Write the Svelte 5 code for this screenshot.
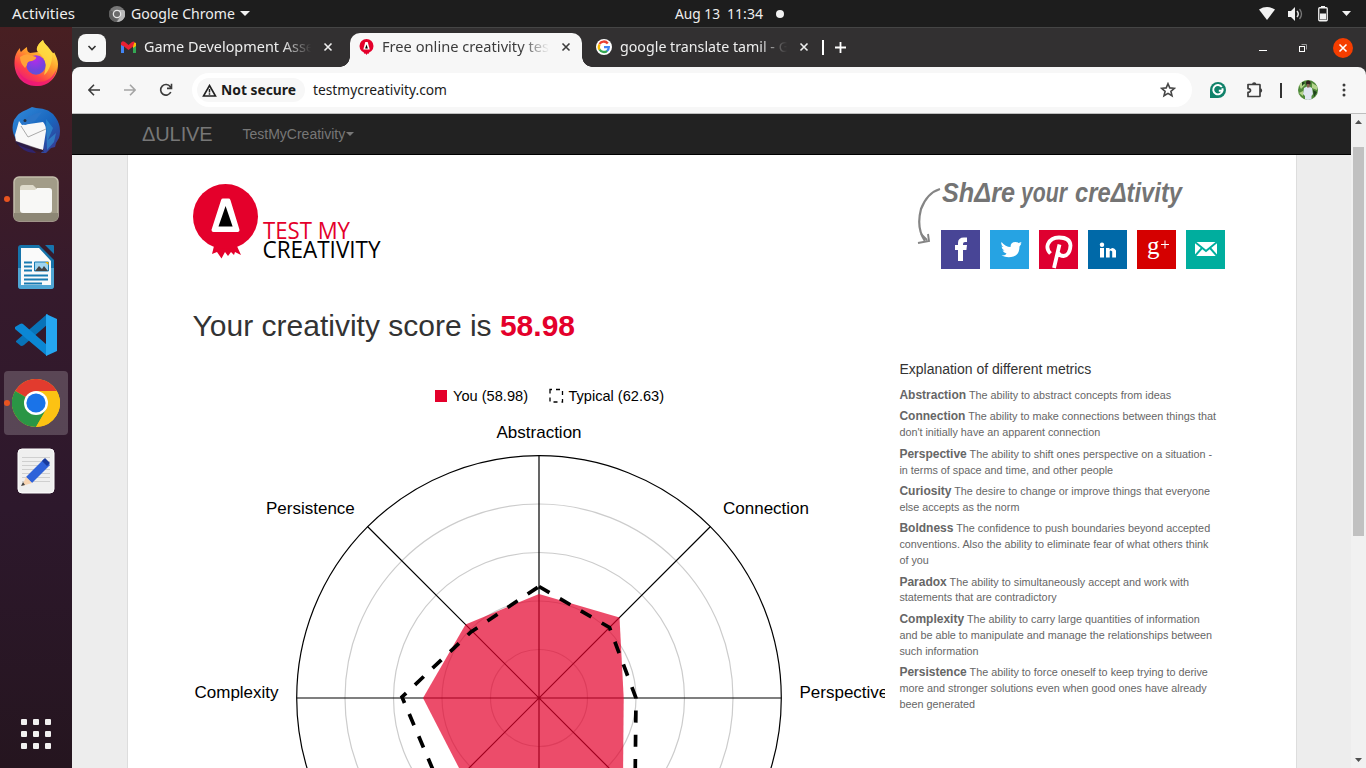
<script>
  const metrics = [
    ['Abstraction', ['The ability to abstract concepts from ideas']],
    ['Connection', ['The ability to make connections between things that', "don't initially have an apparent connection"]],
    ['Perspective', ['The ability to shift ones perspective on a situation -', 'in terms of space and time, and other people']],
    ['Curiosity', ['The desire to change or improve things that everyone', 'else accepts as the norm']],
    ['Boldness', ['The confidence to push boundaries beyond accepted', 'conventions. Also the ability to eliminate fear of what others think', 'of you']],
    ['Paradox', ['The ability to simultaneously accept and work with', 'statements that are contradictory']],
    ['Complexity', ['The ability to carry large quantities of information', 'and be able to manipulate and manage the relationships between', 'such information']],
    ['Persistence', ['The ability to force oneself to keep trying to derive', 'more and stronger solutions even when good ones have already', 'been generated']]
  ];
  const rings = [48.5, 97, 145.5, 194];
  const apps = [0, 1, 2].flatMap((r) => [0, 1, 2].map((c) => [c * 12, r * 12]));
</script>

{#snippet label(text, width, size, weight = 400)}
  <svg class="label" {width} height="20"><text x="0" y="15" font-size={size} font-weight={weight} textLength={width} lengthAdjust="spacingAndGlyphs">{text}</text></svg>
{/snippet}

{#snippet cross()}
  <svg width="10" height="10" viewBox="0 0 10 10"><path d="M1.500 1.500l7 7M8.500 1.500l-7 7" stroke="currentColor" stroke-width="1.600" /></svg>
{/snippet}

<div class="desktop">
  <header class="topbar">
    <div class="left">
      {@render label('Activities', 63, 14)}
      <svg class="gchrome" width="16" height="16" viewBox="0 0 16 16"><circle cx="8" cy="8" r="8" fill="#777" /><path d="M8 8L1 4A8 8 0 0 0 7 16l4-7z" fill="#606060" /><path d="M8 4h7.200A8 8 0 0 1 8 16l3.500-6z" fill="#b8b8b8" /><circle cx="8" cy="8" r="4.300" fill="#e8e8e8" /><circle cx="8" cy="8" r="3" fill="#6b6b6b" /></svg>
      {@render label('Google Chrome', 104, 14)}
      <svg class="caret" width="10" height="5"><path d="M0 0h10L5 5z" fill="#f2f2f2" /></svg>
    </div>
    <div class="clock">{@render label('Aug 13', 45, 14)}{@render label('11:34', 36, 14)}<i></i></div>
    <div class="status">
      <svg width="16" height="13" viewBox="0 0 16 13"><path d="M0 2.500Q8-2.400 16 2.500L8 13z" fill="#f2f2f2" /></svg>
      <svg width="16" height="14" viewBox="0 0 16 14"><path d="M0 4h3l4-4v14l-4-4H0z" fill="#f2f2f2" /><path d="M9 4q2.500 3 0 6" stroke="#ddd" stroke-width="1.500" fill="none" /><path d="M11.500 2q4 5 0 10" stroke="#777" stroke-width="1.300" fill="none" /></svg>
      <svg width="10" height="16" viewBox="0 0 10 16"><rect x=".75" y="1.750" width="8.500" height="13" rx="1" fill="none" stroke="#f2f2f2" stroke-width="1.300" /><path d="M3 0h4v2H3zM2 7.500h6V13.500H2z" fill="#f2f2f2" /></svg>
      <svg width="9" height="5"><path d="M0 0h9L4.500 5z" fill="#f2f2f2" /></svg>
    </div>
  </header>

  <aside class="dock">
    <div class="item">
      <svg width="48" height="48" viewBox="0 0 48 48">
        <defs>
          <linearGradient id="ff" x1=".8" y1=".1" x2=".25" y2="1"><stop offset="0" stop-color="#fff14a" /><stop offset=".38" stop-color="#ff9a2b" /><stop offset=".7" stop-color="#ff4048" /><stop offset="1" stop-color="#e31587" /></linearGradient>
          <radialGradient id="fp" cx=".45" cy=".2" r=".8"><stop offset="0" stop-color="#b42bea" /><stop offset=".7" stop-color="#7343dd" /><stop offset="1" stop-color="#5c54d6" /></radialGradient>
        </defs>
        <path d="M3 18C4 14 6 11 8 9c0 2 0 3 1 4 2-2 4-4 6-5 0 4 1 5 3 6l8-1c-3-3 0-8 5-12 1 4 5 6 9 12 1 1 2 2 2 0 2 4 4 8 4 12C46 39 36 47 24 47 10 47 0 35 3 18z" fill="url(#ff)" />
        <path d="M31 1c1 4 6 7 9 13 1 6-2 18-8 22 4-12 0-18-6-23-3-4 1-9 5-12z" fill="#ffdc42" opacity=".8" />
        <circle cx="24" cy="26" r="9.700" fill="url(#fp)" />
        <path d="M8 18q6-4 10-2l6 2q1 2-4 4-5 0-5 4l-2 3Q8 24 8 18z" fill="#ffa238" />
        <path d="M4 25q3 16 21 18 14 1 20-14-4 18-20 18Q8 45 4 25z" fill="#ec127a" opacity=".65" />
      </svg>
    </div>
    <div class="item">
      <svg width="50" height="50" viewBox="0 0 50 50">
        <defs><linearGradient id="tb" x2="1" y2="1"><stop stop-color="#328bdc" /><stop offset=".55" stop-color="#1965bd" /><stop offset="1" stop-color="#403188" /></linearGradient></defs>
        <path d="M15 4l6-3 4 1q14 0 20 10 6 9 3 20l-3 5-1 4-4 1-5 5h-5l3-4L6 35Q-1 25 3 14 8 6 15 4z" fill="url(#tb)" />
        <path d="M8 15l3 4 21-3q3 3 3 9l-3 19q-12-3-27-8l-1-7z" fill="#f8f8f8" />
        <path d="M10 20l7 11 18-8" fill="none" stroke="#aaa" />
        <path d="M11 17q7-9 20-11l-7 9-10 4z" fill="#2b75c8" /><path d="M35 13l7 9-5 12 8-7-2 9-7 8" fill="#3397d7" opacity=".6" /><circle cx="14" cy="14.500" r="1.500" fill="#243041" />
        <path d="M4 35q9 13 21 12l-7-7z" fill="#30246d" /><path d="M5 35l27 9 1 2q-10 0-28-8z" fill="#28182f" opacity=".6" />
      </svg>
    </div>
    <div class="item running">
      <svg width="46" height="46" viewBox="0 0 46 46"><rect x="1" y="1" width="44" height="44" rx="5" fill="#a29c88" stroke="#c3bdab" stroke-width="1.500" /><path d="M1 37v5q1 3 4 3h36q3 0 4-3v-5" fill="#8d8775" /><path d="M7 12q0-3 3-3h10l3 3v6H7z" fill="#dedacb" /><path d="M7 14h15l2-2h12q3 0 3 3v19q0 3-3 3H10q-3 0-3-3z" fill="#f8f8f6" /></svg>
    </div>
    <div class="item">
      <svg width="38" height="46" viewBox="0 0 38 46"><path d="M1 4q0-3 3-3h18l15 15v26q0 3-3 3H4q-3 0-3-3z" fill="#1673aa" /><path d="M1 24h36v18q0 3-3 3H4q-3 0-3-3z" fill="#4fa5d3" /><path d="M4 4h18l12 13v24H4z" fill="#fafafa" /><path d="M28 1h8q1 0 1 1v8z" fill="#1775ae" /><path d="M7 18.500h8M7 22.500h8M7 26.500h8M7 31.500h24M7 35.500h24M7 39.500h18" stroke="#197bb2" stroke-width="2" /><path d="M17.500 18h14v9h-14z" fill="#9ed4ef" stroke="#197bb2" /><path d="M18 27l4-5 3 3 2-3 4 5z" fill="#444" /><path d="M28 18h3.500v3z" fill="#f2b200" /></svg>
    </div>
    <div class="item">
      <svg width="42" height="42" viewBox="0 0 42 42"><path d="M1 28l5 4q2 0 3-1L33 10V0L31 1 1 27z" fill="#0873b8" /><path d="M0 13l5-3q2-1 3 0l24 21v11L0 15z" fill="#0b87d4" /><path d="M31 0l11 5v32l-11 5z" fill="#25a6f0" /></svg>
    </div>
    <div class="item running selected">
      <svg width="48" height="48" viewBox="0 0 48 48"><circle cx="24" cy="24" r="24" fill="#fcc213" /><path d="M24 24L3.200 12A24 24 0 0 1 44.800 12z" fill="#e23b2e" /><path d="M24 24L3.200 12A24 24 0 0 0 24 48L34.400 30z" fill="#2a9645" /><path d="M24 12h20.800A24 24 0 0 1 24 48l10.400-18z" fill="#fcc213" /><circle cx="24" cy="24" r="12" fill="#fff" /><circle cx="24" cy="24" r="9.600" fill="#1a73e8" /></svg>
    </div>
    <div class="item">
      <svg width="38" height="46" viewBox="0 0 38 46"><rect x="1" y="1" width="36" height="44" rx="4" fill="#efefef" stroke="#fff" /><path d="M5 9.500h28M5 13.500h28M5 17.500h28M5 21.500h28M5 25.500h28M5 29.500h28M5 33.500h28" stroke="#cfcfcf" /><path d="M9 29L27 11l6 6-18 18z" fill="#2f62d9" /><path d="M25 13l3-3 5 5-3 3z" fill="#17399c" /><path d="M9 29l6 6-10 3z" fill="#f7d4b2" /><path d="M6 34l2 3-4 1z" fill="#444" /></svg>
    </div>
    <svg class="apps" width="30" height="30">{#each apps as [x, y]}<rect {x} {y} width="6" height="6" rx="1" fill="#f2f0f0" />{/each}</svg>
  </aside>

  <main class="window">
    <div class="tabs">
      <span class="search"><svg width="10" height="6" viewBox="0 0 10 6"><path d="M1.500 1L5 4.500 8.500 1" fill="none" stroke="#333" stroke-width="1.600" /></svg></span>
      <div class="tab first">
        <svg class="fav" width="15" height="12" viewBox="0 0 15 12"><path d="M0 1.500V12h3V5z" fill="#4285f4" /><path d="M15 1.500V12h-3V5z" fill="#34a853" /><path d="M12 1l3 1v3l-3 2z" fill="#fbbc04" /><path d="M0 2Q1-1 4 1l3.500 3L11 1q2-1 2.500 0L12 5.500 7.500 9 3 5.500 0 4z" fill="#ea2032" /></svg>
        <div class="title dim">{@render label('Game Development Asse', 170, 14)}</div>{@render cross()}
      </div>
      <div class="tab active">
        <svg class="fav" width="15" height="16" viewBox="0 0 15 16"><circle cx="7.500" cy="7" r="7" fill="#e4002b" /><path d="M4.500 12l1 3 1-.5 1 1.500 1-1.500 1 .5 1-3z" fill="#e4002b" /><path d="M6.300 3h2.400l2 7.500H4.300z" fill="#fff" /><path d="M7.500 5.500l1.400 4H6.100z" fill="#000" /></svg>
        <div class="title">{@render label('Free online creativity tes', 167, 14)}</div>{@render cross()}
      </div>
      <div class="tab third">
        <svg class="fav" width="16" height="16" viewBox="0 0 16 16"><circle cx="8" cy="8" r="8" fill="#fff" /><g fill="none" stroke-width="2.300"><path d="M3.500 5A5 5 0 0 1 11.800 4.500" stroke="#ea4335" /><path d="M3.600 5.300A5 5 0 0 0 3.600 10.700" stroke="#fbbc04" /><path d="M3.600 10.500A5 5 0 0 0 11.200 11.800" stroke="#34a853" /><path d="M8 8.200h4.800Q12.700 10.500 11 12" stroke="#4285f4" /></g></svg>
        <div class="title dim">{@render label('google translate tamil - G', 169, 14)}</div>{@render cross()}
      </div>
      <i class="sep"></i>
      <svg class="plus" width="11" height="11"><path d="M5.500 0v11M0 5.500h11" stroke="#fff" stroke-width="1.800" /></svg>
      <div class="controls">
        <svg width="8" height="10"><path d="M0 7.500h8" stroke="#fff" /></svg>
        <svg width="8" height="8"><path d="M2.500.5h5v5" stroke="#999" fill="none" /><rect x=".5" y="2.500" width="5" height="5" fill="none" stroke="#fff" /></svg>
        <b>{@render cross()}</b>
      </div>
    </div>

    <div class="toolbar">
      <svg width="12" height="12" viewBox="0 0 12 12"><path d="M12 6H1M6 .7L.9 6 6 11.300" fill="none" stroke="#3c3c3c" stroke-width="1.600" /></svg>
      <svg width="12" height="12" viewBox="0 0 12 12"><path d="M0 6h11M6 .7L11.100 6 6 11.300" fill="none" stroke="#a5a5a5" stroke-width="1.600" /></svg>
      <svg width="14" height="14" viewBox="0 0 14 14"><path d="M11.800 9A5.300 5.300 0 1 1 11.300 3.800L12.500 5M12.500.8V5.400H8" fill="none" stroke="#3c3c3c" stroke-width="1.600" /></svg>
      <div class="omnibox">
        <div class="chip"><svg width="15" height="13" viewBox="0 0 15 13"><path d="M7.500 1.500l6 10.500h-12z" fill="none" stroke="#222" stroke-width="1.600" /><path d="M7.500 5v3.500M7.500 9.300v1.500" stroke="#222" stroke-width="1.500" /></svg>{@render label('Not secure', 75, 14, 700)}</div>
        {@render label('testmycreativity.com', 134, 14)}
        <svg class="star" width="16" height="16" viewBox="0 0 16 16"><path d="M8 1.700l1.800 4.200 4.600.4-3.500 3 1.100 4.500L8 11.400l-4 2.400 1.100-4.500-3.500-3 4.600-.4z" fill="none" stroke="#474747" stroke-width="1.600" /></svg>
      </div>
      <svg class="grammar" width="16" height="16" viewBox="0 0 16 16"><path d="M8 0a8 8 0 1 1 0 16H0V8a8 8 0 0 1 8-8z" fill="#10826a" /><path d="M11.800 5A4.700 4.700 0 1 0 12.500 8.800H8.800M12.500 6.200v2.600" fill="none" stroke="#fff" stroke-width="1.900" /></svg>
      <svg class="puzzle" width="18" height="18" viewBox="0 0 18 18"><path d="M2 3.500h11.500q.5 0 .5.500v11q0 .5-.5.500H2v-4.200q2.500-.3 2.500-1.900T2 7.600z" fill="none" stroke="#3e3e3e" stroke-width="1.700" stroke-linejoin="round" /><path d="M6 3.500a2.200 2.200 0 0 1 4.400 0zM14 7.200a2.200 2.200 0 0 1 0 4.400z" fill="#3e3e3e" /></svg>
      <i class="bar"></i>
      <svg class="avatar" width="20" height="20" viewBox="0 0 20 20"><defs><clipPath id="avatar"><circle cx="10" cy="10" r="10" /></clipPath></defs><g clip-path="url(#avatar)"><path d="M0 0h20v20H0z" fill="#4f8a3a" /><path d="M0 3l4-2 3 4-4 4zM14 3l5 3v4l-5-2zM1 13l4-2v5z" fill="#b2d38a" /><path d="M4 1l3 2-3 3zM15 10l4 2-3 5z" fill="#1e431b" /><path d="M6 8l4-2 4 2 1 6-1.500 2v4H7v-4l-2-2z" fill="#dfe5f2" /><circle cx="10.300" cy="3" r="2.400" fill="#30221d" /><path d="M9 4h2.600v3.500H9z" fill="#85604f" /></g></svg>
      <svg class="menu" width="4" height="14"><circle cx="2" cy="2" r="1.500" /><circle cx="2" cy="7" r="1.500" /><circle cx="2" cy="12" r="1.500" /></svg>
    </div>

    <div class="viewport">
      <div class="page">
        <nav><span class="brand">ΔULIVE</span><span>TestMyCreativity</span><i></i></nav>
        <section class="container">
          <div class="masthead">
            <svg width="195" height="80" viewBox="0 0 195 80">
              <path d="M22 58l-3 12 5-2 4.500 6.500L32 68l3 4 3-4 3 3 1-3 6 3-5-11z" fill="#e4002b" /><circle cx="32.500" cy="32.500" r="32.500" fill="#e4002b" />
              <path d="M30 16.500h5.500l9 29.500h-24z" fill="#fff" stroke="#fff" stroke-width="4" stroke-linejoin="round" /><path d="M32.600 22l7 20.500H25.500z" />
              <g font-family="Open Sans, sans-serif" font-size="23"><text x="70" y="55" fill="#e4002b" textLength="87" lengthAdjust="spacingAndGlyphs">TEST MY</text><text x="69.500" y="74" textLength="118" lengthAdjust="spacingAndGlyphs">CREATIVITY</text></g>
            </svg>
            <svg class="share" width="310" height="96" viewBox="0 0 310 96">
              <g fill="none" stroke="#858585"><path d="M23 13Q10 17 4 33-1 52 8 65" stroke-width="2.200" /><path d="M1 67l11-2-1-7M4 58l6 6" stroke-width="1.900" /></g>
              <g class="script"><text x="25" y="26" textLength="73" lengthAdjust="spacingAndGlyphs">ShΔre</text><text x="104" y="26" textLength="46" lengthAdjust="spacingAndGlyphs">your</text><text x="158" y="26" textLength="107" lengthAdjust="spacingAndGlyphs">creΔtivity</text></g>
              <g transform="translate(24 54)"><path d="M0 0h39v39H0z" fill="#484596" /><path d="M17 31V20h-3v-5h3v-2q0-5.500 6-5.500h3V12h-2q-2 0-2 2v1h4l-.6 5H22v11z" fill="#fff" /></g>
              <g transform="translate(73 54)"><path d="M0 0h39v39H0z" fill="#26a3e3" /><path d="M11.500 12q4 5 9 5 0-5 5-5 2 0 3 1l3-1-1 2 1-.5-2 3q0 8-6 10-6 2-12-1 4 0 5-2-3-1-4-3h2q-3-2-3-4l2 .5q-3-2-2-5z" fill="#fff" /></g>
              <g transform="translate(122 54)"><path d="M0 0h39v39H0z" fill="#de0030" /><path d="M11.500 23.500Q7 19 9 14q3-6.500 11-6.500 11 0 11.500 8-.5 9.500-7 10.500-4 0-5.500-3.500M20.500 14.500L15 38" fill="none" stroke="#fff" stroke-width="3.800" /></g>
              <g transform="translate(171 54)"><path d="M0 0h39v39H0z" fill="#0069a8" /><path d="M12 18h4v9.500h-4zM18 18h3.500v1.500q4-3.500 6.500 1v7h-3.800v-6q-2.200-2-2.500 0v6H18z" fill="#fff" /><circle cx="14" cy="14.800" r="2.200" fill="#fff" /></g>
              <g transform="translate(220 54)"><path d="M0 0h39v39H0z" fill="#d50000" /><text x="10" y="24" font-family="Liberation Serif, serif" font-size="25" fill="#fff">g</text><path d="M24 14.500h8M28 10.500v8" stroke="#fff" /></g>
              <g transform="translate(269 54)"><path d="M0 0h39v39H0z" fill="#00ae9e" /><path d="M9 12h22v14H9z" fill="#fff" /><path d="M9 12l11 9 11-9M9 26l7-8M31 26l-7-8" fill="none" stroke="#00ae9e" stroke-width="1.900" /></g>
            </svg>
          </div>
          <h1>Your creativity score is <strong>58.98</strong></h1>
          <div class="columns">
            <svg class="chart" width="694" height="412" viewBox="191 356 694 412">
              <rect x="435" y="390" width="12" height="12" fill="#e4002b" /><text x="453" y="401" class="key" textLength="75">You (58.98)</text>
              <rect x="550" y="389.500" width="12.500" height="12.500" fill="none" stroke="#000" stroke-width="1.300" stroke-dasharray="4 4" stroke-dashoffset="2" /><text x="568.500" y="401" class="key" textLength="95.500">Typical (62.63)</text>
              {#each rings as r}<circle cx="539" cy="698" {r} fill="none" stroke="#ccc" stroke-width="1.200" />{/each}
              <circle cx="539" cy="698" r="242.300" fill="none" stroke="#000" stroke-width="1.200" />
              <path d="M539 456v484M297 698h484M367.500 526.500l343 343M710.500 526.500l-343 343" stroke="#000" stroke-width="1.200" />
              <path d="M539 594L619.500 617.500 623.700 698 623 782 539 810 462.400 774.600 423 698 465.500 624.500z" fill="#e4002b" opacity=".7" />
              <path d="M539 586.500L609.500 627.500 636 698 635 794 539 830 443.200 793.800 402 697 471 632z" fill="none" stroke="#000" stroke-width="3.700" stroke-dasharray="12.100 12.100" />
              <g class="axis"><text x="496.500" y="438">Abstraction</text><text x="723" y="514">Connection</text><text x="799.500" y="698">Perspective</text><text x="266" y="514">Persistence</text><text x="194.500" y="698">Complexity</text></g>
            </svg>
            <div class="metrics">
              <h2>Explanation of different metrics</h2>
              {#each metrics as [name, lines]}
                <p><strong>{name}</strong> {#each lines as line, i}{#if i}<br />{/if}{line}{/each}</p>
              {/each}
            </div>
          </div>
        </section>
      </div>
      <div class="scrollbar"><svg width="7" height="4"><path d="M0 4h7L3.500 0z" fill="#505050" /></svg><i></i><svg width="7" height="4"><path d="M0 0h7L3.500 4z" fill="#505050" /></svg></div>
    </div>
  </main>
</div>

<style>
  :global(body) { overflow: hidden; }
  * { box-sizing: border-box; }
  svg { display: block; flex: none; }
  .desktop { width: 1366px; height: 768px; display: grid; grid-template: 27px 741px / 72px 1294px; overflow: hidden; font-family: 'Liberation Sans', Arial, sans-serif; }
  .label { fill: currentColor; font-family: 'Noto Sans', sans-serif; overflow: visible; }
  .topbar { grid-column: 1 / 3; background: #1d1d1d; color: #eee; display: flex; align-items: center; position: relative; }
  .left, .clock, .status { display: flex; align-items: center; }
  .left { padding-left: 12px; width: 675px; }
  .gchrome { margin: 0 6px 0 34px; }
  .caret { margin-left: 5px; }
  .clock { gap: 7px; }
  .clock i { width: 8px; height: 8px; border-radius: 50%; background: #f2f2f2; margin-left: 6px; }
  .status { margin-left: auto; padding-right: 15px; }
  .status svg:nth-child(2) { margin-left: 13px; }
  .status svg:nth-child(3) { margin-left: 14px; }
  .status svg:nth-child(4) { margin-left: 14px; }
  .dock { background: linear-gradient(#481f22, #351a2c 35%, #2d182c 65%, #25151f); padding-top: 2px; display: flex; flex-direction: column; align-items: center; }
  .item { width: 72px; height: 68px; flex: none; display: flex; align-items: center; justify-content: center; position: relative; }
  .selected::after { content: ''; position: absolute; inset: 2px 4px; background: #ffffff32; border-radius: 4px; }
  .selected svg { position: relative; z-index: 1; }
  .running::before { content: ''; position: absolute; left: 4px; top: 31px; width: 6px; height: 6px; border-radius: 50%; background: #e95420; z-index: 2; }
  .apps { margin: auto 0 19px; }
  .window { display: flex; flex-direction: column; min-width: 0; background: #323031; }
  .tabs { height: 40px; flex: none; border-top: 1px solid #454545; padding: 0 13px 0 6px; display: flex; align-items: center; color: #eee; }
  .search { width: 28px; height: 28px; background: #f7f7f7; border-radius: 8px; display: grid; place-items: center; }
  .tab { display: flex; align-items: center; height: 34px; margin-top: 5px; padding-bottom: 6px; }
  .first { margin-left: 15px; width: 229px; }
  .active { width: 232px; background: #f7f7f7; color: #3c3c3c; border-radius: 10px 10px 0 0; padding-left: 9px; position: relative; }
  .active::before, .active::after { content: ''; position: absolute; bottom: 0; width: 10px; height: 10px; }
  .active::before { left: -10px; background: radial-gradient(circle at 0 0, #323031 9.5px, #f7f7f7 10px); }
  .active::after { right: -10px; background: radial-gradient(circle at 100% 0, #323031 9.5px, #f7f7f7 10px); }
  .third { padding-left: 14px; width: 240px; }
  .title { width: 169px; height: 20px; overflow: hidden; margin: 0 10px 0 8px; mask-image: linear-gradient(90deg, #000 82%, transparent 99%); }
  .sep { width: 2px; height: 15px; background: #fff; }
  .plus { margin-left: 11px; }
  .controls { margin-left: auto; display: flex; align-items: center; }
  .controls svg:nth-child(2) { margin-left: 32px; }
  .controls b { width: 20px; height: 20px; border-radius: 50%; background: #f53d00; display: grid; place-items: center; margin-left: 26px; color: white; }
  .toolbar { height: 47px; flex: none; background: #f7f7f7; border-radius: 8px 8px 0 0; border-bottom: 1px solid #bebebe; display: flex; align-items: center; padding-left: 16px; }
  .toolbar > svg:nth-child(2) { margin-left: 24px; }
  .toolbar > svg:nth-child(3) { margin-left: 23px; }
  .omnibox { margin-left: 19px; width: 1000px; height: 34px; border-radius: 17px; background: #fff; display: flex; align-items: center; padding-left: 5px; color: #1b1b1b; }
  .chip { width: 108px; height: 24px; border-radius: 12px; background: #f7f7f7; display: flex; align-items: center; gap: 4px; padding-left: 5px; margin-right: 8px; }
  .star { margin: 0 16px 0 auto; }
  .grammar { margin-left: 18px; }
  .puzzle { margin-left: 20px; }
  .bar { width: 2px; height: 15px; background: #333; margin-left: 16px; }
  .avatar { margin-left: 16px; }
  .menu { margin-left: 24px; fill: #3c3c3c; }
  .viewport { height: 654px; display: flex; }
  .page { width: 1279px; background: #ededed; }
  nav { height: 41px; background: #222; border-bottom: 1px solid #000; display: flex; align-items: center; color: #777; font-size: 14px; padding-left: 70px; }
  nav .brand { font-size: 20px; letter-spacing: -.1px; width: 100.500px; }
  nav i { border: 4px solid transparent; border-top-color: #777; border-bottom: 0; margin-left: 1px; }
  .container { margin-left: 55px; width: 1170px; height: 613px; overflow: hidden; background: #fff; border: solid #ddd; border-width: 0 1px; }
  .masthead { display: flex; justify-content: space-between; padding: 29px 69px 0 65px; height: 154px; }
  .share { margin-top: -8px; }
  .script { font: italic 700 28px 'Liberation Sans', sans-serif; fill: #747474; }
  h1 { font-size: 30px; font-weight: 400; line-height: 34px; color: #333; margin: 0 0 13px 64.600px; }
  h1 strong { color: #e4002b; }
  .columns { display: flex; padding-left: 63px; }
  .key { font-size: 14.600px; }
  .axis { font-size: 17px; }
  .metrics { margin-left: 14.400px; width: 330px; color: #666; white-space: nowrap; }
  h2 { font-size: 14px; line-height: 16px; font-weight: 400; color: #333; margin: 5px 0 11px; }
  p { font-size: 10.800px; line-height: 15.850px; margin: 0 0 5.650px; }
  p strong { font-size: 12px; line-height: 1; }
  .scrollbar { width: 15px; background: #f1f1f1; display: flex; flex-direction: column; align-items: center; padding: 6px 0; }
  .scrollbar i { width: 11px; height: 389px; margin-top: 23px; background: #c1c1c1; }
  .scrollbar svg:last-child { margin-top: auto; }
</style>
